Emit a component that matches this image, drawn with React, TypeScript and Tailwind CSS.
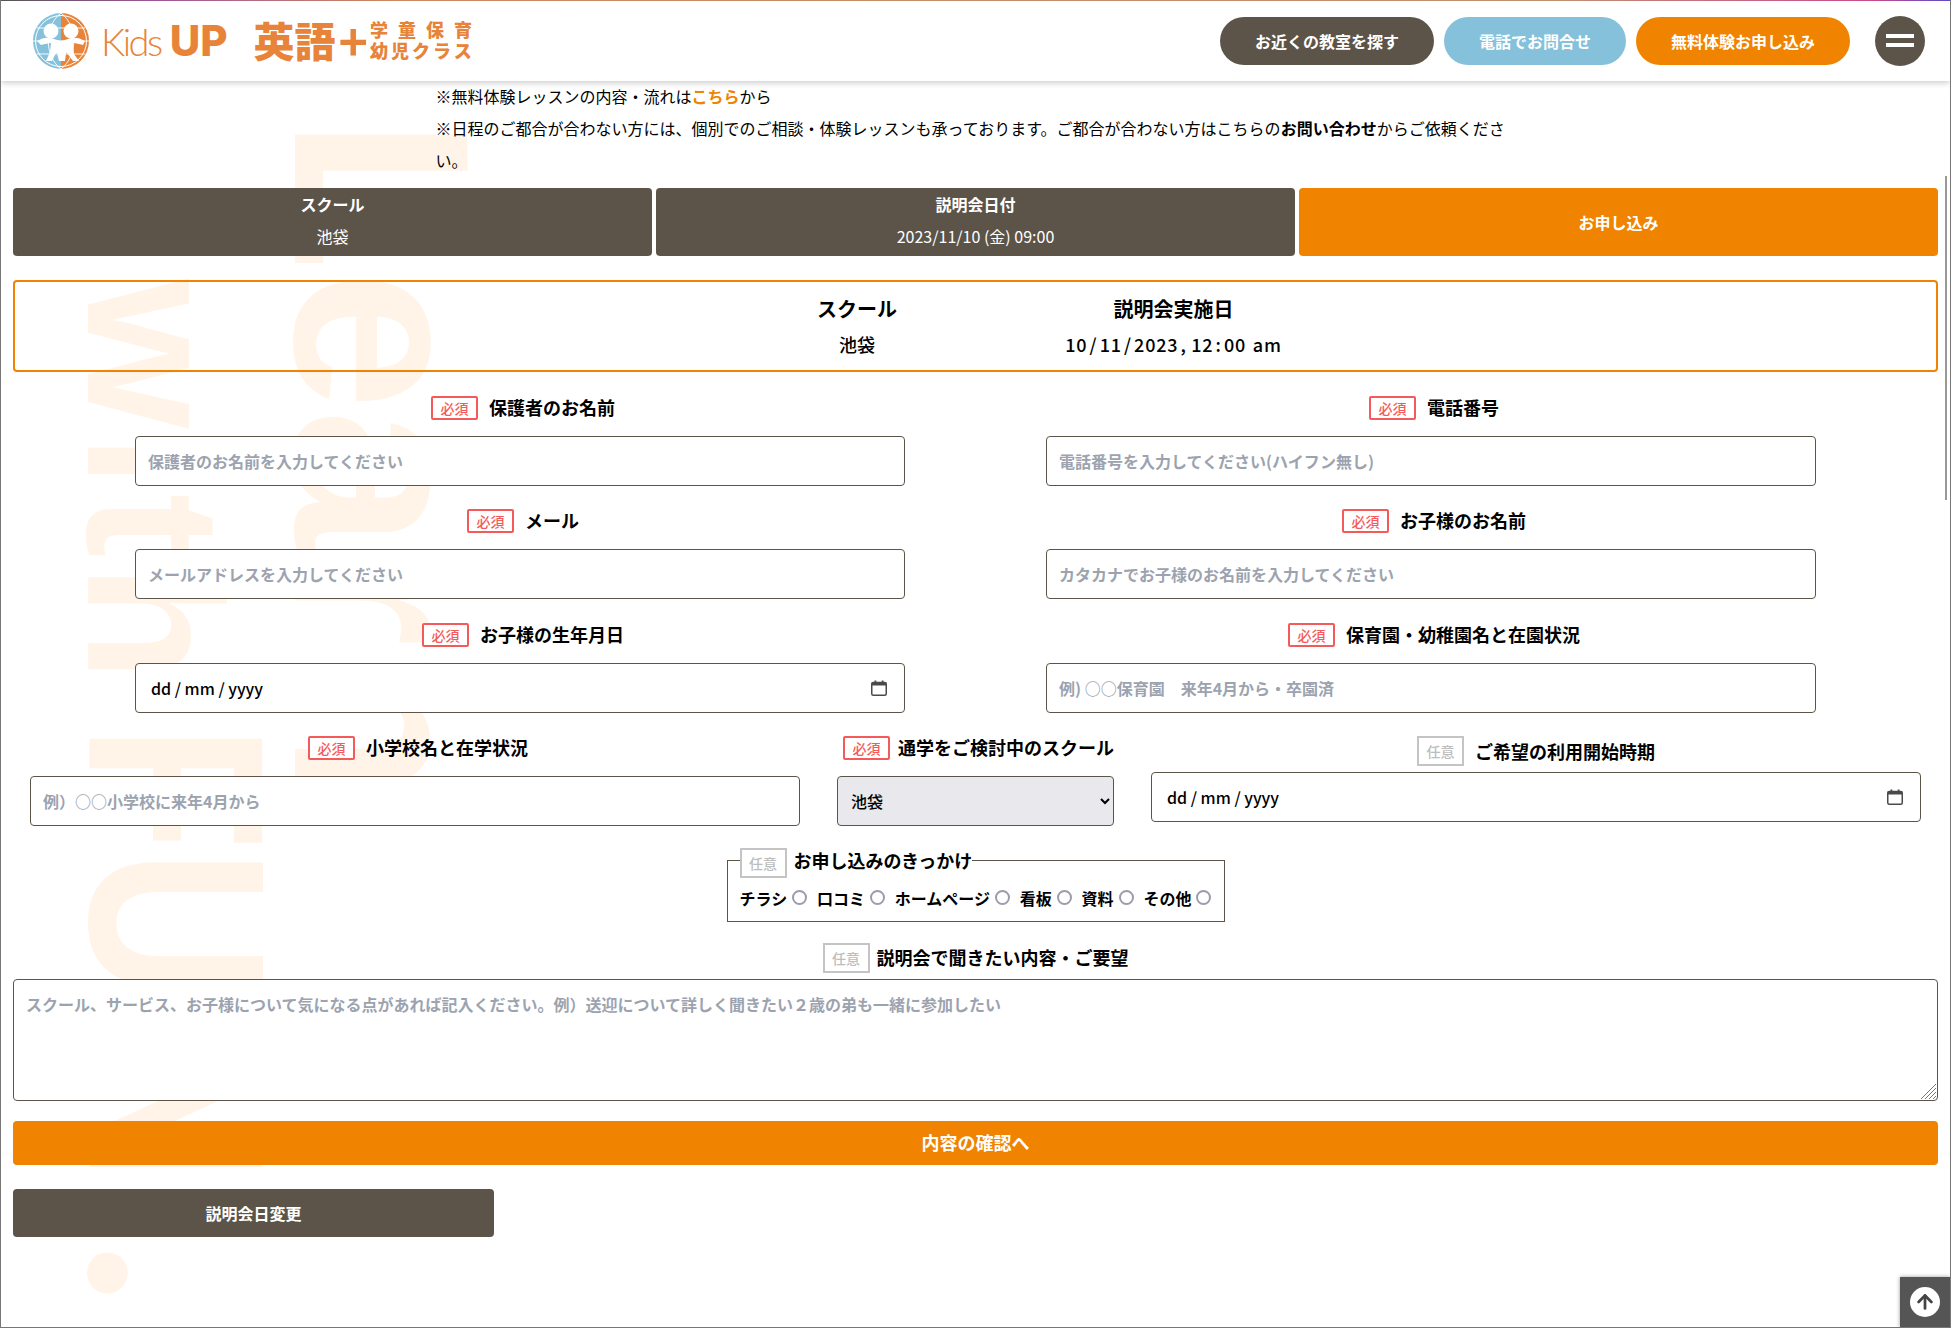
import { ArrowUp } from "lucide-react";
import type { ReactNode } from "react";

const inputCls =
  "block h-[50px] w-full rounded-[4px] border border-[#5c5449] bg-white px-3 text-[16px] font-bold outline-none placeholder:text-[#9ca3af]";

const Badge = ({ optional }: { optional?: boolean }) =>
  optional ? (
    <span className="flex h-[30px] w-[47px] shrink-0 items-center justify-center border-2 border-[#c4c4c4] bg-white text-[14px] font-medium text-[#bdbdbd]">
      任意
    </span>
  ) : (
    <span className="mt-[2px] flex h-[24px] w-[47px] shrink-0 items-center justify-center rounded-[2px] border-2 border-[#f55a5a] bg-white text-[14px] font-medium text-[#f55a5a]">
      必須
    </span>
  );

const Label = ({ text, gap = "gap-[11px]" }: { text: string; gap?: string }) => (
  <div className={`ml-[6px] flex h-[28px] items-center justify-center whitespace-nowrap text-[18px] font-bold leading-none text-black ${gap}`}>
    <Badge />
    <span>{text}</span>
  </div>
);

const TextField = ({ label, placeholder }: { label: string; placeholder: string }) => (
  <div className="w-[770px]">
    <Label text={label} />
    <input className={`${inputCls} mt-[15px]`} placeholder={placeholder} />
  </div>
);

const CalendarIcon = () => (
  <svg width="16" height="16" viewBox="0 0 16 16" fill="none">
    <rect x="0.75" y="2.5" width="14.5" height="12.75" rx="1.5" stroke="#4a4a4a" strokeWidth="1.5" />
    <rect x="0.75" y="2.5" width="14.5" height="3" fill="#4a4a4a" />
    <rect x="3.5" y="0.5" width="1.8" height="3" fill="#4a4a4a" />
    <rect x="10.7" y="0.5" width="1.8" height="3" fill="#4a4a4a" />
  </svg>
);

const DateField = () => (
  <div className="flex h-[50px] w-full items-center justify-between rounded-[4px] border border-[#5c5449] bg-white pl-[15px] pr-[17px] text-[16px] font-medium text-black">
    <span className="whitespace-pre">dd / mm / yyyy</span>
    <CalendarIcon />
  </div>
);

const HeaderBtn = ({ color, width, children }: { color: string; width: string; children: ReactNode }) => (
  <a className={`flex h-[48px] items-center justify-center rounded-full text-[16px] font-bold text-white ${color} ${width}`}>
    {children}
  </a>
);

const Logo = () => (
  <div className="flex items-center text-[#e8833a]">
    <svg width="58" height="58" viewBox="0 0 58 58" className="ml-[31px] shrink-0">
      <path d="M29 1a28 28 0 0 0 0 56z" fill="#86c1dc" />
      <path d="M29 1a28 28 0 0 1 0 56z" fill="#e8833a" />
      <circle cx="29" cy="29" r="25.5" fill="none" stroke="#fff" strokeWidth="1" />
      <path d="M29 1C12 14 12 44 29 57M29 1c17 13 17 43 0 56M5 16h48M5 42h48M1 29h56" fill="none" stroke="#fff" strokeWidth="0.9" />
      <circle cx="19" cy="19" r="7.5" fill="#fff" />
      <circle cx="39" cy="19" r="7.5" fill="#fff" />
      <path d="M5 29c5-3 9-4 14-3l6 2c3 1 5 1 8 0l6-2c5-1 9 0 14 3l-2 4c-4-1-7-2-10-2l1 11 5 7h-6l-6-8h-1l-1 8h-6l-2-8h-1l-4 8h-6l4-9 1-9c-3 0-6 1-10 2z" fill="#fff" />
    </svg>
    <span className="ml-[11px] font-['Lato'] text-[38px] font-light leading-none tracking-[-2.5px]">Kids</span>
    <span className="ml-[9px] font-['Inter'] text-[42px] font-extrabold leading-none">UP</span>
    <span className="ml-[26px] -mt-[3px] text-[41px] font-black leading-none">英語</span>
    <span className="ml-[3px] -mt-[4px] text-[50px] font-bold leading-none">+</span>
    <span className="ml-[2px] -mt-[2px] flex flex-col text-[18px] font-black leading-[21px]">
      <span className="tracking-[10px]">学童保育</span>
      <span className="tracking-[3px]">幼児クラス</span>
    </span>
  </div>
);

const Radio = ({ text }: { text: string }) => (
  <label className="flex items-center gap-[5px] text-[16px] font-bold text-black">
    {text}
    <input type="radio" name="trigger" className="h-[15px] w-[15px] appearance-none rounded-full border-2 border-[#9c9cab] bg-white" />
  </label>
);

const Step = ({ title, value, active }: { title: string; value?: string; active?: boolean }) => (
  <div className={`flex h-[68px] flex-col items-center justify-center rounded-[4px] text-[16px] leading-[32px] text-white ${active ? "bg-[#f08300]" : "bg-[#5c5449] pb-[5px]"}`}>
    <span className="font-bold">{title}</span>
    {value && <span>{value}</span>}
  </div>
);

export default function App() {
  return (
    <div className="relative h-[1328px] overflow-hidden border-x border-b border-x-[#777] border-b-[#777] bg-white font-['Noto_Sans_CJK_JP','Noto_Sans',sans-serif] text-black">
      {/* background lettering */}
      <div className="pointer-events-none absolute inset-0 select-none font-['Liberation_Sans'] font-bold leading-none text-[#fff4e7] [writing-mode:vertical-rl]">
        <span className="absolute left-[255px] top-[118px] text-[250px]">Learn</span>
        <span className="absolute left-[57px] top-[279px] text-[192px] tracking-[6px]">with</span>
        <span className="absolute left-[50px] top-[725px] origin-top scale-y-[0.82] text-[250px]">
          F<span className="tracking-[42px]">U</span>N
        </span>
        <span className="absolute left-[57px] top-[1241px] font-['Lato'] text-[270px]">.</span>
      </div>

      {/* Header */}
      <header className="relative z-10 flex h-[81px] items-center justify-between bg-white pr-[25px] shadow-[0_2px_6px_rgba(0,0,0,0.2)]">
        <Logo />
        <div className="flex items-center gap-[10px]">
          <HeaderBtn color="bg-[#5c5449]" width="w-[214px]">お近くの教室を探す</HeaderBtn>
          <HeaderBtn color="bg-[#86c1dc]" width="w-[182px]">電話でお問合せ</HeaderBtn>
          <HeaderBtn color="bg-[#f08300]" width="w-[214px]">無料体験お申し込み</HeaderBtn>
          <button className="ml-[15px] flex h-[50px] w-[50px] flex-col items-center justify-center gap-[5px] rounded-full bg-[#5c5449]">
            <span className="h-[4px] w-[28px] bg-white" />
            <span className="h-[4px] w-[28px] bg-white" />
          </button>
        </div>
      </header>

      <main className="relative px-3">
        <div className="mx-auto -mt-[1px] w-[1080px] text-[16px] leading-[32px]">
          <p>
            ※無料体験レッスンの内容・流れは<span className="font-bold text-[#f08300]">こちら</span>から
          </p>
          <p>
            ※日程のご都合が合わない方には、個別でのご相談・体験レッスンも承っております。ご都合が合わない方はこちらの<span className="font-bold">お問い合わせ</span>からご依頼ください。
          </p>
        </div>

        <div className="mt-3 grid grid-cols-3 gap-1">
          <Step title="スクール" value="池袋" />
          <Step title="説明会日付" value="2023/11/10 (金) 09:00" />
          <Step title="お申し込み" active />
        </div>

        <div className="mt-6 flex h-[92px] justify-center rounded-[4px] border-2 border-[#f08300] text-center">
          <div className="w-[396px] pt-[11px]">
            <p className="text-[20px] font-bold leading-[32px]">スクール</p>
            <p className="mt-[3px] text-[18px] font-medium leading-[32px]">池袋</p>
          </div>
          <div className="w-[237px] pt-[11px]">
            <p className="text-[20px] font-bold leading-[32px]">説明会実施日</p>
            <p className="mt-[3px] whitespace-pre text-[18px] font-medium leading-[32px] tracking-[0.8px] [word-spacing:-2.6px]">10 / 11 / 2023 ,  12 : 00   am</p>
          </div>
        </div>

        {/* Form */}
        <div className="mt-[21px] grid grid-cols-[770px_770px] justify-between gap-y-[20.33px] px-[122px]">
          <TextField label="保護者のお名前" placeholder="保護者のお名前を入力してください" />
          <TextField label="電話番号" placeholder="電話番号を入力してください(ハイフン無し)" />
          <TextField label="メール" placeholder="メールアドレスを入力してください" />
          <TextField label="お子様のお名前" placeholder="カタカナでお子様のお名前を入力してください" />
          <div>
            <Label text="お子様の生年月日" />
            <div className="mt-[15px]">
              <DateField />
            </div>
          </div>
          <TextField label="保育園・幼稚園名と在園状況" placeholder="例) ○○保育園　来年4月から・卒園済" />
        </div>

        <div className="mt-[20px] flex justify-between px-[17px]">
          <TextField label="小学校名と在学状況" placeholder="例）○○小学校に来年4月から" />
          <div className="w-[277px]">
            <Label text="通学をご検討中のスクール" gap="gap-[8px]" />
            <select className="mt-[15px] block h-[50px] w-full rounded-[4px] border border-[#5c5449] bg-[#e9e9ed] px-[9px] text-[16px] font-medium">
              <option>池袋</option>
            </select>
          </div>
          <div className="w-[770px] pt-[3px]">
            <div className="flex h-[30px] items-center justify-center gap-[11px] text-[18px] font-bold leading-none">
              <Badge optional />
              <span>ご希望の利用開始時期</span>
            </div>
            <div className="mt-[6px]">
              <DateField />
            </div>
          </div>
        </div>

        <fieldset className="mx-auto mt-[22px] w-[498px] border border-[#5c5449] px-3 pb-[11px] pt-[13px]">
          <legend className="flex h-[25px] items-center gap-[7px] text-[18px] font-bold leading-none">
            <span className="self-start">
              <Badge optional />
            </span>
            お申し込みのきっかけ
          </legend>
          <div className="flex h-[24px] items-center justify-between">
            {["チラシ", "口コミ", "ホームページ", "看板", "資料", "その他"].map((t) => (
              <Radio key={t} text={t} />
            ))}
          </div>
        </fieldset>

        <div className="mt-[22px] flex h-[29px] items-center justify-center gap-[7px] text-[18px] font-bold leading-none">
          <Badge optional />
          <span className="-mt-[2px]">説明会で聞きたい内容・ご要望</span>
        </div>
        <div className="relative mt-[6px]">
          <textarea
            className="block h-[122px] w-full resize-none rounded-[4px] border border-[#5c5449] bg-white p-3 text-[16px] font-bold outline-none placeholder:text-[#9ca3af]"
            placeholder="スクール、サービス、お子様について気になる点があれば記入ください。例）送迎について詳しく聞きたい２歳の弟も一緒に参加したい"
          />
          <svg width="15" height="15" viewBox="0 0 15 15" className="absolute bottom-[2px] right-[2px]">
            <path d="M0 15L15 0M4 15L15 4M8 15l7-7M12 15l3-3" stroke="#777" strokeWidth="1" />
          </svg>
        </div>
        <button className="mt-5 block h-[44px] w-full rounded-[4px] bg-[#f08300] text-[18px] font-bold text-white">内容の確認へ</button>
        <button className="mt-6 block h-[48px] w-[481px] rounded-[4px] bg-[#5c5449] text-[16px] font-bold text-white">説明会日変更</button>
      </main>

      {/* window edge, scroll thumb and back to top */}
      <div className="absolute inset-x-0 top-0 z-20 h-[1px] bg-[linear-gradient(to_right,#555_0%,#a0559a_8%,#c98a5f_20%,#bf8f72_80%,#c84a8c_96%,#5b4ac8_100%)]" />
      <div className="absolute right-[3px] top-[176px] z-20 h-[324px] w-[2px] bg-[#999]" />
      <a className="absolute bottom-0 right-0 z-20 flex h-[50px] w-[50px] items-center justify-center bg-[#555] shadow-[0_0_4px_rgba(0,0,0,0.4)]">
        <span className="flex h-[30px] w-[30px] items-center justify-center rounded-full bg-white">
          <ArrowUp size={22} strokeWidth={3} color="#444" />
        </span>
      </a>
    </div>
  );
}
